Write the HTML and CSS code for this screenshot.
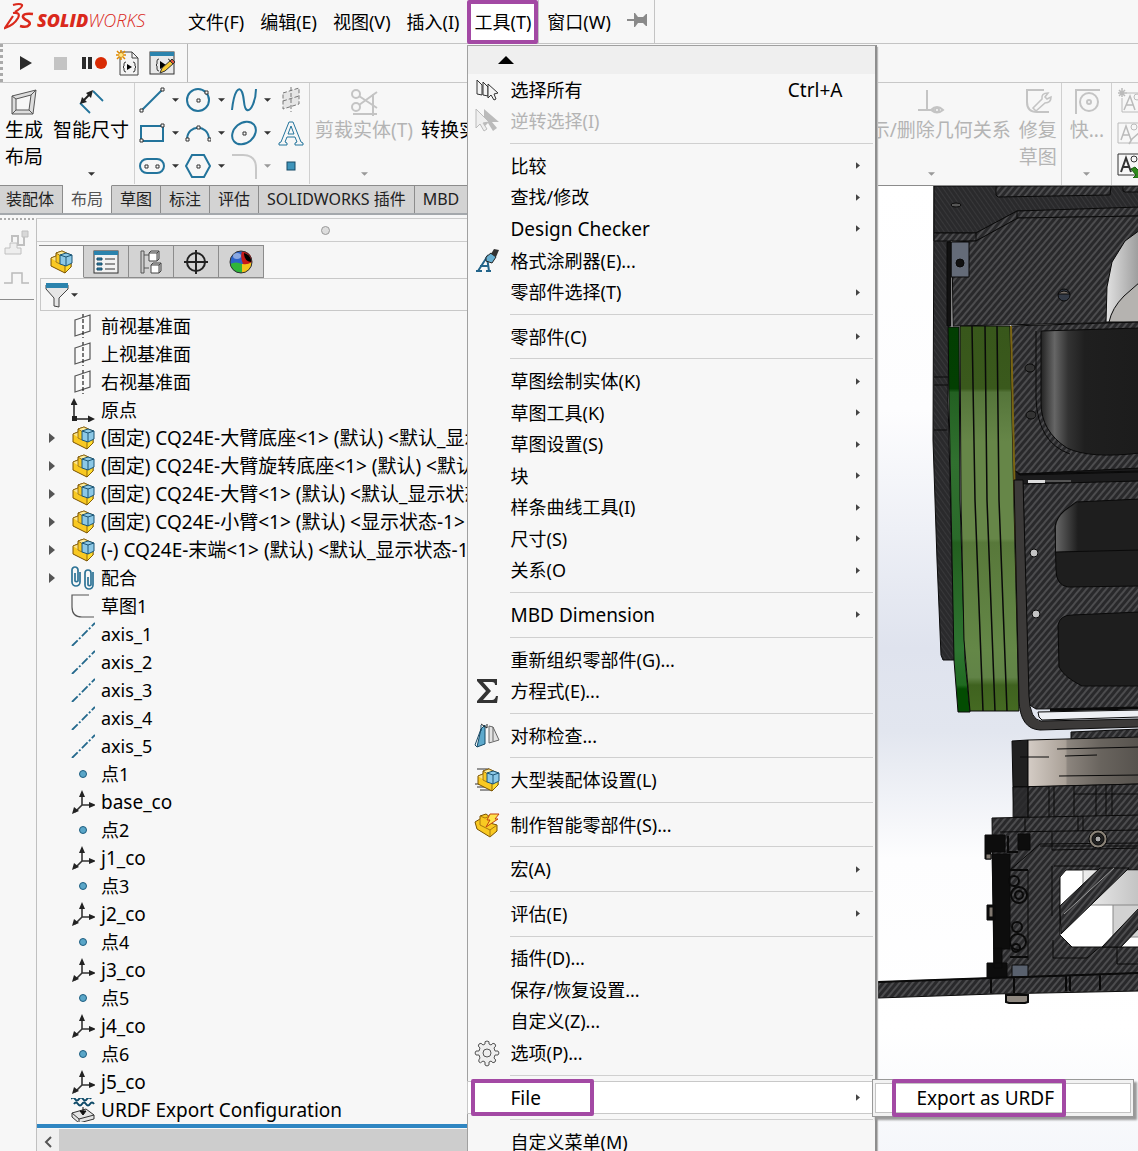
FILE: index.html
```html
<!DOCTYPE html>
<html lang="zh-CN">
<head>
<meta charset="utf-8">
<meta name="viewport" content="width=device-width, initial-scale=1">
<title>SOLIDWORKS</title>
<link rel="stylesheet" href="styles.css">
</head>
<body>
<svg class="defs" aria-hidden="true">
  <defs>
    <symbol id="part" viewBox="0 0 24 24">
      <path d="M2 8l5-2V3l6-2 9 4v12l-6 6L2 16z" fill="#f9c922" stroke="#7a5200"/>
      <path d="M2 8l5-2v6l4 2" fill="#fde58a" stroke="#7a5200" stroke-width=".7"/>
      <path d="M7 3l6-2 4 2-5 3z" fill="#fdeb9a" stroke="#7a5200" stroke-width=".7"/>
      <path d="M16 15l6-3v5l-6 6z" fill="#ffdc2e" stroke="#7a5200" stroke-width=".8"/>
      <path d="M11 5l6-2 6 2v8l-6 3-6-2z" fill="#8cc8e6" stroke="#1d5676"/>
      <path d="M11 5l6 2 6-2M17 7v9" fill="none" stroke="#1d5676"/>
    </symbol>
    <symbol id="plane" viewBox="0 0 24 24">
      <path d="M4 6l15-5v16L4 22z" fill="#fafafa" stroke="#555" stroke-width="1.2"/>
      <path d="M12 -1v26" stroke="#222" stroke-width="1.2" stroke-dasharray="4 2"/>
    </symbol>
    <symbol id="origin" viewBox="0 0 24 24">
      <path d="M3 21V5M3 21h15" stroke="#222" stroke-width="1.5"/>
      <path d="M3 0l3.500 7h-7zM24 21l-7 3.500v-7z" fill="#222"/><rect x="1" y="18" width="5" height="5" fill="#222"/>
    </symbol>
    <symbol id="mates" viewBox="0 0 24 24">
      <g fill="none" stroke="#2d7396" stroke-width="1.700"><path d="M4 7v8a2 2 0 0 0 3 0V4a3 3 0 0 0-6 0v12a4 4 0 0 0 8 0V6"/><path d="M17 11v8a2 2 0 0 0 3 0V7a3 3 0 0 0-6 0v12a4 4 0 0 0 8 0V6"/></g>
    </symbol>
    <symbol id="sketch" viewBox="0 0 24 24"><path d="M18 1H1v12q0 10 10 10h12" fill="none" stroke="#555" stroke-width="1.200"/></symbol>
    <symbol id="axis" viewBox="0 0 24 24"><path d="M1 24L24 1" stroke="#23688c" stroke-width="1.800" stroke-dasharray="8 2 2 2"/></symbol>
    <symbol id="point" viewBox="0 0 24 24"><circle cx="12" cy="12" r="3.500" fill="#5aa6c8" stroke="#1d5d80"/></symbol>
    <symbol id="coord" viewBox="0 0 24 24">
      <path d="M11 15V5M11 15h9M11 15l-7 7" stroke="#333" stroke-width="1.600"/>
      <path d="M11 0l3 7H8zM25 15l-7 3v-6zM1 24l2-7 5 4z" fill="#222"/>
    </symbol>
    <symbol id="urdf" viewBox="0 0 24 24">
      <path d="M0 1q2-3 4 0t4 0 4 0 4 0 4 0M3 6q2-3 4 0t4 0 4 0 4 0 4 0" fill="none" stroke="#0e4a68" stroke-width="2"/>
      <path d="M1 15l14-4 8 6v4L8 25l-7-6z" fill="#e4e4e4" stroke="#333"/><path d="M1 15l7 6 15-4M8 21v4" fill="none" stroke="#333"/>
      <path d="M12 9v4M9 13h6l-3 4z" stroke="#111" fill="#111"/>
    </symbol>
    <symbol id="tri-d" viewBox="0 0 8 4"><path d="M0 0h8L4 4z" fill="currentColor"/></symbol>
    <symbol id="tri-r" viewBox="0 0 6 10"><path d="M0 0l6 5-6 5z" fill="currentColor"/></symbol>
    <symbol id="cursors" viewBox="0 0 24 24">
      <g fill="#f4f4f4" stroke="#333"><path d="M2 2v14l5 1V7z"/><path d="M8 4v13l5 1V9z"/><path d="M13 6v14l3-3 3 5 2-1-2-5 4-1z"/></g>
    </symbol>
    <symbol id="invert" viewBox="0 0 24 24">
      <path d="M9 0v18l4-4 5 8 4-3-5-6h7z" fill="#bbb"/><path d="M1 0v19l4-4 4 7 3-2-4-6 6-1z" fill="#efefef" stroke="#bbb"/>
    </symbol>
  </defs>
</svg>

<div class="app">
  <header class="menubar">
    <div class="logo">
      <svg width="30" height="30" viewBox="0 0 30 30" fill="none" stroke="#da291c" stroke-width="2.600" aria-hidden="true">
        <path d="M9 3q7-2 9 0 1 2-7 7" stroke-width="2.200"/><path d="M9 11q8-1 5 5-4 7-13 10l8-12" stroke-width="2.200"/>
        <path d="M29 12q-9-1-10 2-1 2 5 5 3 2 1 4-2 3-9 1"/>
      </svg>
      <span class="wordmark"><b>SOLID</b><span>WORKS</span></span>
    </div>
    <nav class="menus" aria-label="主菜单">
      <button class="menu-title">文件(F)</button>
      <button class="menu-title">编辑(E)</button>
      <button class="menu-title">视图(V)</button>
      <button class="menu-title">插入(I)</button>
      <div class="menu-host">
        <button class="menu-title open" aria-expanded="true">工具(T)</button>
        <span class="mark mark-title"></span>
        <div class="dropdown" role="menu" aria-label="工具">
          <button class="scroll-up" aria-label="向上滚动"><svg width="16" height="8" viewBox="0 0 16 8"><path d="M0 8l8-8 8 8z"/></svg></button>
          <button class="item" role="menuitem"><svg class="ic"><use href="#cursors"/></svg><span>选择所有</span><kbd class="latin">Ctrl+A</kbd></button>
          <button class="item" role="menuitem" disabled><svg class="ic"><use href="#invert"/></svg><span>逆转选择(I)</span></button>
          <hr>
          <button class="item sub" role="menuitem"><span>比较</span><svg class="more"><use href="#tri-r"/></svg></button>
          <button class="item sub" role="menuitem"><span>查找/修改</span><svg class="more"><use href="#tri-r"/></svg></button>
          <button class="item sub" role="menuitem"><span class="latin">Design Checker</span><svg class="more"><use href="#tri-r"/></svg></button>
          <button class="item" role="menuitem"><svg class="ic" viewBox="0 0 24 24"><path d="M1 22h6M3 22L12 8l2 14M5 17h8M11 22h5" fill="none" stroke="#23648a" stroke-width="2"/><path d="M11 8l5-4 5 4-4 6-6-2z" fill="#67aed0" stroke="#222"/><path d="M16 5l3-5 5 1-3 7z" fill="#333"/></svg><span>格式涂刷器(E)...</span></button>
          <button class="item sub" role="menuitem"><span>零部件选择(T)</span><svg class="more"><use href="#tri-r"/></svg></button>
          <hr>
          <button class="item sub" role="menuitem"><span>零部件(C)</span><svg class="more"><use href="#tri-r"/></svg></button>
          <hr>
          <button class="item sub" role="menuitem"><span>草图绘制实体(K)</span><svg class="more"><use href="#tri-r"/></svg></button>
          <button class="item sub" role="menuitem"><span>草图工具(K)</span><svg class="more"><use href="#tri-r"/></svg></button>
          <button class="item sub" role="menuitem"><span>草图设置(S)</span><svg class="more"><use href="#tri-r"/></svg></button>
          <button class="item sub" role="menuitem"><span>块</span><svg class="more"><use href="#tri-r"/></svg></button>
          <button class="item sub" role="menuitem"><span>样条曲线工具(I)</span><svg class="more"><use href="#tri-r"/></svg></button>
          <button class="item sub" role="menuitem"><span>尺寸(S)</span><svg class="more"><use href="#tri-r"/></svg></button>
          <button class="item sub" role="menuitem"><span>关系(O</span><svg class="more"><use href="#tri-r"/></svg></button>
          <hr>
          <button class="item sub" role="menuitem"><span class="latin">MBD Dimension</span><svg class="more"><use href="#tri-r"/></svg></button>
          <hr>
          <button class="item" role="menuitem"><span>重新组织零部件(G)...</span></button>
          <button class="item" role="menuitem"><svg class="ic" viewBox="0 0 24 24"><path d="M2 0h20v6h-2q0-3-3-3H8l8 9-8 9h9q3 0 4-4h2l-1 7H2v-2l9-10L2 2z" fill="#333"/></svg><span>方程式(E)...</span></button>
          <hr>
          <button class="item" role="menuitem"><svg class="ic" viewBox="0 0 24 24"><path d="M6 5l4-4v19l-8 3z" fill="#5da9cc" stroke="#174a66"/><path d="M6 5L0 21l2 2M6 1v6" fill="none" stroke="#174a66"/><path d="M14 2v17l10-3L18 3zM18 3v14" fill="#e2e2e2" stroke="#666"/><path d="M6 0l6 4v-4" fill="none" stroke="#222"/></svg><span>对称检查...</span></button>
          <hr>
          <button class="item" role="menuitem"><svg class="ic" viewBox="0 0 24 24"><path d="M2 1h12M0 16h12M2 19h13M5 22h12" stroke="#333"/><use href="#part" x="1"/></svg><span>大型装配体设置(L)</span></button>
          <hr>
          <button class="item" role="menuitem"><svg class="ic" viewBox="0 0 24 24"><path d="M0 9l5-3V3l6-2 4 3v6l7 2v6l-7 6L2 16z" fill="#f9c922" stroke="#7a5200"/><path d="M5 6v6l10 5 7-5M15 17v7M5 3l5 2 5-2" fill="none" stroke="#a87810"/><path d="M15 1h9l-4 5h3L11 14l4-7h-3z" fill="#ffe34d" stroke="#c2410c"/></svg><span>制作智能零部件(S)...</span></button>
          <hr>
          <button class="item sub" role="menuitem"><span>宏(A)</span><svg class="more"><use href="#tri-r"/></svg></button>
          <hr>
          <button class="item sub" role="menuitem"><span>评估(E)</span><svg class="more"><use href="#tri-r"/></svg></button>
          <hr>
          <button class="item" role="menuitem"><span>插件(D)...</span></button>
          <button class="item" role="menuitem"><span>保存/恢复设置...</span></button>
          <button class="item" role="menuitem"><span>自定义(Z)...</span></button>
          <button class="item" role="menuitem"><svg class="ic" viewBox="0 0 24 24" fill="#eee" stroke="#555"><path d="M10 3q-1-3 2-3t2 3l2 1q2-3 4-1t-1 4l1 3q4-1 4 2t-4 2l-1 3q3 2 1 4t-4-1l-2 1q1 4-2 4t-2-4l-2-1q-3 3-4 1t1-4l-1-3q-4 1-4-2t4-2l1-3q-3-2-1-4t4 1z"/><circle cx="12" cy="12" r="4"/></svg><span>选项(P)...</span></button>
          <hr>
          <div class="item-host">
            <button class="item sub active" role="menuitem" aria-expanded="true"><span class="latin">File</span><svg class="more"><use href="#tri-r"/></svg></button>
            <span class="mark mark-file"></span>
            <div class="flyout" role="menu" aria-label="File">
              <button class="latin" role="menuitem">Export as URDF</button>
              <span class="mark mark-export"></span>
            </div>
          </div>
          <hr>
          <button class="item" role="menuitem"><span>自定义菜单(M)</span></button>
        </div>
      </div>
      <button class="menu-title">窗口(W)</button>
      <button class="pin" aria-label="固定菜单"><svg width="20" height="14" viewBox="0 0 20 14"><path d="M0 6h7V0h1l3 4h5l3-3h1v12h-1l-3-3h-5l-3 4H7V8H0z" fill="#8a8a8a"/></svg></button>
    </nav>
  </header>

  <div class="macrobar">
    <div class="macros">
      <button aria-label="运行宏"><svg width="14" height="14" viewBox="0 0 14 14"><path d="M1 0l12 7-12 7z" fill="#2b2b2b"/></svg></button>
      <button aria-label="停止宏"><svg width="13" height="13"><rect width="13" height="13" fill="#c4c4c4"/></svg></button>
      <button aria-label="录制宏"><svg width="26" height="14" viewBox="0 0 26 14"><path d="M1 1h4v12H1zM7 1h4v12H7z" fill="#2b2b2b"/><circle cx="20" cy="7" r="6" fill="#d92b04"/></svg></button>
      <button aria-label="新建宏"><svg width="24" height="26" viewBox="0 0 24 26"><path d="M4 2h12l6 6v17H4z" fill="#f4f4f4" stroke="#444"/><path d="M16 2v6h6" fill="none" stroke="#444"/><path d="M10 12q-2 0-2 2v2l-1 1 1 1v2q0 2 2 2M17 12q2 0 2 2v2l1 1-1 1v2q0 2-2 2" fill="none" stroke="#333"/><path d="M11 14l5 3-5 3z"/><path d="M5 0v10M0 5h10M1 1l8 8M9 1L1 9" stroke="#e08a00" stroke-width="1.500"/><circle cx="5" cy="5" r="2" fill="#ffe680"/></svg></button>
      <button aria-label="编辑宏"><svg width="26" height="26" viewBox="0 0 26 26"><rect x="1" y="2" width="24" height="22" fill="#e9e9e9" stroke="#333"/><rect x="1" y="2" width="24" height="4" fill="#2b83ad"/><path d="M10 9q-2 0-2 2v3l-1 1 1 1v3q0 2 2 2M19 9q2 0 2 3" fill="none" stroke="#333"/><path d="M11 11l6 4-6 4z"/><path d="M11 23l2-5 9-8 3 3-9 8z" fill="#f7ca34" stroke="#333"/><path d="M21 11l2-2 3 3-2 2z" fill="#d8543c" stroke="#333"/></svg></button>
    </div>
  </div>

  <div class="ribbon">
    <button class="tool two"><svg width="28" height="28" viewBox="0 0 28 28" fill="#ddd" stroke="#555"><path fill-rule="evenodd" d="M2 8l24-6-3 24H2zm4 3v11h13l2-15z"/><path d="M2 8l4 3M26 2l-5 5M2 26l4-4M23 26l-4-4"/></svg><span>生成<br>布局</span></button>
    <button class="tool"><svg width="28" height="28" viewBox="0 0 28 28" fill="none"><path d="M16 3l10 10M3 15l10 10" stroke="#23749c" stroke-width="1.800"/><path d="M6 13l8-8" stroke="#222" stroke-width="2"/><path d="M3 16l2-7 5 5zM16 2l-7 3 5 5z" fill="#222"/></svg><span>智能尺寸</span><svg class="dd"><use href="#tri-d"/></svg></button>
    <div class="sketch-grid">
      <button aria-label="直线"><svg class="sk" viewBox="0 0 26 26"><path d="M2 24L24 2"/><path class="node" d="M1 22h3v3H1zM22 1h3v3h-3z"/></svg></button><svg class="dd"><use href="#tri-d"/></svg>
      <button aria-label="圆"><svg class="sk" viewBox="0 0 26 26"><circle cx="13" cy="13" r="11"/><path class="node" d="M12 12h3v3h-3zM20 4h3v3h-3z"/></svg></button><svg class="dd"><use href="#tri-d"/></svg>
      <button aria-label="样条曲线"><svg class="sk" viewBox="0 0 26 26"><path d="M1 23C3 4 8-2 11 5s1 16 5 18 9-10 9-21"/></svg></button><svg class="dd"><use href="#tri-d"/></svg>
      <button aria-label="基准面"><svg class="sk off" viewBox="0 0 26 26"><path d="M5 6l16-5v16L5 22z" fill="#e6e6e6" stroke-dasharray="4 2"/><path d="M13 0v25M5 14l16-5" stroke-dasharray="4 2"/></svg></button>
      <button aria-label="矩形"><svg class="sk" viewBox="0 0 26 26"><path d="M2 6h22v15H2z"/><path class="node" d="M1 19h3v3H1zM22 4h3v3h-3z"/></svg></button><svg class="dd"><use href="#tri-d"/></svg>
      <button aria-label="圆弧"><svg class="sk" viewBox="0 0 26 26"><path d="M2 19C3 4 23 4 24 19"/><path class="node" d="M1 18h3v3H1zM23 18h3v3h-3zM12 6h3v3h-3z"/></svg></button><svg class="dd"><use href="#tri-d"/></svg>
      <button aria-label="椭圆"><svg class="sk" viewBox="0 0 26 26"><ellipse cx="13" cy="13" rx="13" ry="10" transform="rotate(-40 13 13)"/><path class="node" d="M12 12h3v3h-3z"/></svg></button><svg class="dd"><use href="#tri-d"/></svg>
      <button aria-label="文字"><svg class="sk thin" viewBox="0 0 26 26"><path d="M1 25v-2l2-1L11 2h4l8 20 2 1v2h-8v-2l2-1-2-5H9l-2 5 2 1v2zM10 14h6l-3-8z"/></svg></button>
      <button aria-label="直槽口"><svg class="sk" viewBox="0 0 26 26"><rect x="1" y="6" width="24" height="14" rx="7"/><path class="node" d="M6 12h3v3H6zM17 12h3v3h-3z"/></svg></button><svg class="dd"><use href="#tri-d"/></svg>
      <button aria-label="多边形"><svg class="sk" viewBox="0 0 26 26"><path d="M1 13L7 2h12l6 11-6 11H7z"/><path class="node" d="M12 12h3v3h-3z"/></svg></button><svg class="dd"><use href="#tri-d"/></svg>
      <button aria-label="圆角" disabled><svg class="sk pale" viewBox="0 0 26 26"><path d="M1 2h11q13 0 13 13v11"/></svg></button><svg class="dd dim"><use href="#tri-d"/></svg>
      <button aria-label="点"><svg class="sk" viewBox="0 0 26 26"><rect x="9" y="9" width="8" height="8" fill="#3f94ba" stroke="#174a66" stroke-width="1"/></svg></button>
    </div>
    <button class="tool" disabled><svg width="28" height="28" viewBox="0 0 28 28" fill="none" stroke="#c4c4c4" stroke-width="2"><circle cx="6" cy="6" r="4"/><circle cx="6" cy="19" r="4"/><path d="M9 8l18 12M9 17L27 4M3 26h24M23 6v22"/></svg><span>剪裁实体(T)</span><svg class="dd dim"><use href="#tri-d"/></svg></button>
    <button class="tool convert"><span>转换实体引用</span></button>
    <div class="ribbon-end">
      <button class="tool" disabled><svg width="28" height="28" viewBox="0 0 28 28" fill="none" stroke="#c4c4c4" stroke-width="2"><path d="M10 2v20M1 22h16"/><path d="M14 22q6-6 12 0-6 5-12 0z"/><circle cx="20" cy="22" r="2"/></svg><span>显示/删除几何关系</span><svg class="dd dim"><use href="#tri-d"/></svg></button>
      <button class="tool two" disabled><svg width="28" height="28" viewBox="0 0 28 28" fill="none" stroke="#c4c4c4" stroke-width="2"><path d="M20 2H3v12q0 10 10 10h12"/><path d="M9 20l9-9q-1-6 6-6l-3 4 2 2 4-2q0 6-6 6l-9 8z" stroke-width="1.600"/></svg><span>修复<br>草图</span></button>
      <button class="tool snap" disabled><svg width="28" height="28" viewBox="0 0 28 28" fill="none" stroke="#c4c4c4" stroke-width="2"><path d="M3 26V2h24"/><circle cx="16" cy="14" r="9"/><circle cx="16" cy="14" r="2"/></svg><span>快...</span><svg class="dd dim"><use href="#tri-d"/></svg></button>
      <div class="blocks">
        <svg width="28" height="26" viewBox="0 0 28 26" fill="none" stroke="#bbb"><path d="M10 5h18M5 10v14h23" /><path d="M7 22L13 8l5 14M9 17h7M5 0v9M1 5h9M2 2l6 6M8 2L2 8" stroke-width="1.500"/><circle cx="20" cy="9" r="3"/></svg>
        <svg width="28" height="26" viewBox="0 0 28 26" fill="none" stroke="#bbb"><path d="M1 3h27M1 3v20h27"/><path d="M4 20L9 6l5 14M6 15h7M12 24l3-5 9-8" stroke-width="1.500"/><circle cx="17" cy="7" r="3"/></svg>
        <svg width="28" height="26" viewBox="0 0 28 26" fill="none" stroke="#333"><path d="M1 2h27M1 2v21h27"/><path d="M4 20L9 6l5 14M6 15h7" stroke-width="2"/><circle cx="17" cy="7" r="3"/><path d="M14 17l4-2 4 4 2-2v9h-8l3-3z" fill="#2f8a1c" stroke="#1c5c10"/></svg>
      </div>
    </div>
  </div>

  <div class="workspace">
    <div class="left">
      <nav class="tabs" aria-label="命令管理器">
        <button>装配体</button><button class="on">布局</button><button>草图</button><button>标注</button><button>评估</button><button>SOLIDWORKS 插件</button><button>MBD</button>
      </nav>
      <div class="dock">
        <div class="rail">
          <svg width="26" height="26" viewBox="0 0 26 26" fill="#eee" stroke="#c0c0c0"><path d="M1 24h16v-6h-4v-5H6v5H1z"/><path d="M8 12V6h6v9h6V6" fill="none" stroke-width="2"/><path d="M18 1h6v6h-6z" fill="#d8d8d8"/></svg>
          <svg width="26" height="14" viewBox="0 0 26 14" fill="none" stroke="#bbb" stroke-width="1.500"><path d="M0 12h8V2h10v10h7"/></svg>
        </div>
        <section class="panel">
          <div class="splitter"><i></i></div>
          <div class="ptabs">
            <button class="on" aria-label="设计树"><svg class="ic"><use href="#part"/></svg></button>
            <button aria-label="属性"><svg class="ic wide" viewBox="0 0 26 24"><rect x="1" y="1" width="24" height="22" fill="#f2f2f2" stroke="#333"/><path d="M1 1h24v4H1z" fill="#2b83ad"/><path d="M4 8h5v2H4zM4 13h5v2H4zM4 18h5v2H4z" fill="#2b83ad" stroke="#174a66"/><path d="M12 9h10M12 14h10M12 19h10" stroke="#333"/></svg></button>
            <button aria-label="配置"><svg class="ic" viewBox="0 0 24 24"><path d="M2 1h3v22H2zM5 5h5M5 18h5" fill="#ccc" stroke="#555"/><path d="M10 3h8v8h-8zM12 15h8v8h-8z" fill="#fff" stroke="#444"/><path d="M10 3l2-2h8v8l-2 2M18 3l2-2M12 15l2-2h8v8l-2 2M20 15l2-2" fill="none" stroke="#444"/></svg></button>
            <button aria-label="尺寸专家"><svg class="ic" viewBox="0 0 24 24" fill="none" stroke="#222" stroke-width="2"><circle cx="12" cy="12" r="9"/><path d="M12 0v24M0 12h24"/></svg></button>
            <button aria-label="外观"><svg class="ic" viewBox="0 0 24 24"><circle cx="12" cy="12" r="11" fill="#2b62c8"/><path d="M1 14q6-3 12 0v9Q3 23 1 14z" fill="#2fb53a"/><path d="M13 14q5 0 10-2-1 10-10 11z" fill="#f2c21a"/><path d="M13 1q10 1 10 11-5 3-9 2-3-7-1-13z" fill="#c81818"/><path d="M15 3q8 3 7 9-7-1-7-9z" fill="#000"/><circle cx="12" cy="12" r="11" fill="none" stroke="#333"/><ellipse cx="8" cy="6" rx="4" ry="3" fill="#fff" opacity=".45"/></svg></button>
          </div>
          <button class="filter" aria-label="过滤"><svg width="24" height="26" viewBox="0 0 24 26"><path d="M1 3v4l8 9v8l5 1v-9l9-9V3z" fill="#e6e6e6" stroke="#444"/><path d="M1 1h22v5H1z" fill="#2b83ad"/></svg><svg class="dd"><use href="#tri-d"/></svg></button>
          <ul class="tree">
            <li><i></i><svg class="ic"><use href="#plane"/></svg><span>前视基准面</span></li>
            <li><i></i><svg class="ic"><use href="#plane"/></svg><span>上视基准面</span></li>
            <li><i></i><svg class="ic"><use href="#plane"/></svg><span>右视基准面</span></li>
            <li><i></i><svg class="ic"><use href="#origin"/></svg><span>原点</span></li>
            <li class="latin"><svg class="tw"><use href="#tri-r"/></svg><svg class="ic"><use href="#part"/></svg><span>(固定) CQ24E-大臂底座&lt;1&gt; (默认) &lt;默认_显示状态-1&gt;</span></li>
            <li class="latin"><svg class="tw"><use href="#tri-r"/></svg><svg class="ic"><use href="#part"/></svg><span>(固定) CQ24E-大臂旋转底座&lt;1&gt; (默认) &lt;默认_显示状态-1&gt;</span></li>
            <li class="latin"><svg class="tw"><use href="#tri-r"/></svg><svg class="ic"><use href="#part"/></svg><span>(固定) CQ24E-大臂&lt;1&gt; (默认) &lt;默认_显示状态-1&gt;</span></li>
            <li class="latin"><svg class="tw"><use href="#tri-r"/></svg><svg class="ic"><use href="#part"/></svg><span>(固定) CQ24E-小臂&lt;1&gt; (默认) &lt;显示状态-1&gt;</span></li>
            <li class="latin"><svg class="tw"><use href="#tri-r"/></svg><svg class="ic"><use href="#part"/></svg><span>(-) CQ24E-末端&lt;1&gt; (默认) &lt;默认_显示状态-1&gt;</span></li>
            <li><svg class="tw"><use href="#tri-r"/></svg><svg class="ic"><use href="#mates"/></svg><span>配合</span></li>
            <li><i></i><svg class="ic"><use href="#sketch"/></svg><span>草图1</span></li>
            <li><i></i><svg class="ic"><use href="#axis"/></svg><span>axis_1</span></li>
            <li><i></i><svg class="ic"><use href="#axis"/></svg><span>axis_2</span></li>
            <li><i></i><svg class="ic"><use href="#axis"/></svg><span>axis_3</span></li>
            <li><i></i><svg class="ic"><use href="#axis"/></svg><span>axis_4</span></li>
            <li><i></i><svg class="ic"><use href="#axis"/></svg><span>axis_5</span></li>
            <li><i></i><svg class="ic"><use href="#point"/></svg><span>点1</span></li>
            <li class="latin"><i></i><svg class="ic"><use href="#coord"/></svg><span>base_co</span></li>
            <li><i></i><svg class="ic"><use href="#point"/></svg><span>点2</span></li>
            <li class="latin"><i></i><svg class="ic"><use href="#coord"/></svg><span>j1_co</span></li>
            <li><i></i><svg class="ic"><use href="#point"/></svg><span>点3</span></li>
            <li class="latin"><i></i><svg class="ic"><use href="#coord"/></svg><span>j2_co</span></li>
            <li><i></i><svg class="ic"><use href="#point"/></svg><span>点4</span></li>
            <li class="latin"><i></i><svg class="ic"><use href="#coord"/></svg><span>j3_co</span></li>
            <li><i></i><svg class="ic"><use href="#point"/></svg><span>点5</span></li>
            <li class="latin"><i></i><svg class="ic"><use href="#coord"/></svg><span>j4_co</span></li>
            <li><i></i><svg class="ic"><use href="#point"/></svg><span>点6</span></li>
            <li class="latin"><i></i><svg class="ic"><use href="#coord"/></svg><span>j5_co</span></li>
            <li class="latin"><i></i><svg class="ic"><use href="#urdf"/></svg><span>URDF Export Configuration</span></li>
          </ul>
          <div class="hscroll"><button aria-label="向左滚动"><svg width="8" height="12" viewBox="0 0 8 12"><path d="M7 1L2 6l5 5" fill="none" stroke="#555" stroke-width="2"/></svg></button><span></span></div>
        </section>
      </div>
    </div>

    <main class="viewport">
      <svg viewBox="469 186 669 965" preserveAspectRatio="xMinYMin slice" role="img" aria-label="机械臂装配体模型">
        <defs>
          <pattern id="cf" width="5" height="5" patternUnits="userSpaceOnUse" patternTransform="rotate(40)"><rect width="5" height="5" fill="#29292b"/><rect width="2" height="5" fill="#4c4c4e"/></pattern>
          <pattern id="cf2" width="4" height="4" patternUnits="userSpaceOnUse" patternTransform="rotate(-35)"><rect width="4" height="4" fill="#2a2a2c"/><rect width="1" height="4" fill="#38383a"/></pattern>
          <linearGradient id="sky" x1="0" y1="0" x2="0" y2="1"><stop offset="0" stop-color="#fff"/><stop offset=".16" stop-color="#fdfdfe"/><stop offset=".33" stop-color="#dfe3ee"/><stop offset=".39" stop-color="#e2e6ef"/><stop offset=".48" stop-color="#fdfdfe"/><stop offset=".6" stop-color="#fff"/><stop offset=".7" stop-color="#f4f6fa"/></linearGradient>
          <linearGradient id="gd" gradientUnits="userSpaceOnUse" x1="0" y1="327" x2="0" y2="712"><stop offset="0" stop-color="#023e02"/><stop offset=".16" stop-color="#033f02"/><stop offset=".17" stop-color="#236022"/><stop offset=".35" stop-color="#30702f"/><stop offset=".55" stop-color="#2a6a2a"/><stop offset=".56" stop-color="#235f1f"/><stop offset=".84" stop-color="#2e7531"/><stop offset=".93" stop-color="#1f6a20"/><stop offset=".94" stop-color="#034c02"/></linearGradient>
          <linearGradient id="gl" gradientUnits="userSpaceOnUse" x1="0" y1="327" x2="0" y2="712"><stop offset="0" stop-color="#38571b"/><stop offset=".16" stop-color="#3a591c"/><stop offset=".17" stop-color="#55753a"/><stop offset=".3" stop-color="#668648"/><stop offset=".55" stop-color="#668648"/><stop offset=".56" stop-color="#58783a"/><stop offset=".84" stop-color="#648747"/><stop offset=".91" stop-color="#618347"/><stop offset=".93" stop-color="#3f621f"/><stop offset="1" stop-color="#456a22"/></linearGradient>
          <linearGradient id="bore" gradientUnits="userSpaceOnUse" x1="1041" y1="0" x2="1138" y2="0"><stop offset="0" stop-color="#222"/><stop offset=".14" stop-color="#666"/><stop offset=".28" stop-color="#333"/><stop offset=".45" stop-color="#1f1f1f"/><stop offset="1" stop-color="#1c1c1c"/></linearGradient>
          <linearGradient id="ring" gradientUnits="userSpaceOnUse" x1="1028" y1="0" x2="1138" y2="0"><stop offset="0" stop-color="#d4ccc5"/><stop offset=".34" stop-color="#aaa198"/><stop offset=".36" stop-color="#8c857e"/><stop offset=".66" stop-color="#69645e"/><stop offset="1" stop-color="#57534e"/></linearGradient>
          <linearGradient id="metal" x1="0" x2="1"><stop offset="0" stop-color="#e2e2e2"/><stop offset="1" stop-color="#9a9a9a"/></linearGradient>
          <linearGradient id="glow" gradientUnits="userSpaceOnUse" x1="1056" y1="0" x2="1078" y2="0"><stop offset="0" stop-color="#666"/><stop offset="1" stop-color="#1e1e1e"/></linearGradient>
        </defs>
        <rect x="469" y="186" width="1400" height="1400" fill="url(#sky)"/>
        <g stroke="#0a0a0a">
          <path d="M934 186h17l-3 214 4 160 3 100-12 0-2-5-4-95-4-120z" fill="url(#cf2)"/>
          <path d="M934 377h14M934 385h14M934 430h13" fill="none"/>
          <path d="M934 186h206v24l-123 1-41 22h-42z" fill="url(#cf2)"/>
          <path d="M996 186v9l2 2 112-2 1-9zM1123 186v5l2 1h15v-6z" fill="url(#cf)"/>
          <path d="M934 233h42l41-22 123-4v9l-122 2-42 23h-42z" fill="url(#cf)"/>
          <path d="M976 233v8M1017 211v7" fill="none"/>
          <path d="M952 242l24-1 42-23 122-2v106l-187 4z" fill="url(#cf)"/>
          <path d="M951 242h18v35h-18z" fill="#646b78"/><circle cx="960" cy="263" r="4" fill="#111"/>
          <path d="M947 242h4v84h-4z" fill="#111"/>
          <ellipse cx="956" cy="205" rx="5" ry="2" fill="#555"/><circle cx="1064" cy="295" r="6" fill="#333a46"/><path d="M1058 294q6-6 12 0z" fill="#776f68"/>
          <path d="M1140 230l-15 11-13 21-5 25-1 35h34z" fill="url(#metal)"/><path d="M1109 322q3-14 15-26l16-14v40z" fill="#b5b3b0"/>
          <path d="M1011 466h129v20h-126z" fill="#1c1c1d"/>
          <path d="M1011 326l129-4v146l-120 6-6-4z" fill="url(#cf)"/>
          <path d="M1041 331l99-3v125q-50 6-73-5-26-17-26-45z" fill="url(#bore)"/>
          <path d="M1036 331v68q2 44 34 55M1014 470l6 5 120-3M1018 474l122-3" fill="none"/>
          <path d="M948 327h11l1 173 5 160 5 52h-12l-4-52-5-260z" fill="url(#gd)"/>
          <path d="M960 326h50l4 180 5 205h-49l-6-71-3-140z" fill="url(#gl)"/>
          <path d="M972 326l3 174 8 211M985 326l2 174 8 211M997 326l2 174 8 211" fill="none" stroke-width="1.500"/>
          <path d="M1011 326l4 180 5 190" fill="none" stroke="#7a6512" stroke-width="2"/>
          <path d="M1028 480h17v3h-17z" fill="#ddd" stroke="none"/><path d="M1045 480h26v2h-26z" fill="#555" stroke="none"/>
          <path d="M1023 484l117-3v227l-104 1-8-5z" fill="url(#cf)"/>
          <path d="M1055 526q2-9 9-15l12-9 64-3v87l-72 1q-12-2-12-17z" fill="#1e1e1e"/>
          <path d="M1056 552v-26q1-8 9-15l13-9v49z" fill="url(#glow)" stroke="none"/><path d="M1056 552l84-2" fill="none"/>
          <path d="M1058 625q2-10 14-10l68-3v74h-58q-18-9-23-19z" fill="#1e1e1e"/>
          <path d="M1014 480h9l6 216q1 24 12 25l99-2v8l-100 3q-20-1-21-30z" fill="#3c3a39"/>
          <path d="M1038 712l102-2v7l-98 3q-4-2-4-8z" fill="#eef0f5"/><path d="M1050 710l90-2" stroke-width="3"/>
          <circle cx="1034" cy="553" r="4" fill="#c4c4c4"/><circle cx="1036" cy="614" r="4" fill="#c4c4c4"/><ellipse cx="1030" cy="368" rx="5" ry="4" fill="#333"/><ellipse cx="1031" cy="415" rx="5" ry="4" fill="#333"/>
          <path d="M1071 732l69-3v10h-69z" fill="url(#cf)"/>
          <path d="M1012 741l16-1v47h-15z" fill="#202020"/><path d="M1028 740l112-3v47l-112 3z" fill="url(#ring)"/>
          <path d="M1020 757h29M1057 749l83-2M1065 756l32-1M1059 776l81-1" fill="none"/>
          <path d="M1013 787l127-3v32l-126 2z" fill="url(#cf)"/><path d="M1013 787h15v30h-15z" fill="#29292b" opacity=".8"/>
          <path d="M1028 787v30M1049 787v29M1054 787v29M1074 786v30M1096 785v31M1106 785v31M1112 785v31M1074 794h66" fill="none"/>
          <path d="M992 818l148-3v162l-146 2z" fill="url(#cf)"/>
          <path d="M1000 832l140-2M1078 816v15M1083 816v15M1025 818v14M1010 870l30-26 100-1M1052 832v18l88-2M1040 846h100M1028 870v90M1052 866v50M1054 866h46M1053 940v18h34l30-26" fill="none"/>
          <path d="M1060 877l6-7h74v77h-68l-12-12z" fill="#fff"/>
          <path d="M1083 870h57v35h-57z" fill="url(#metal)" stroke="none" opacity=".6"/><path d="M1113 905h27v32h-27z" fill="#d2d2d2" stroke="none"/><path d="M1083 870v35h57M1113 905v32h27" fill="none" stroke="#888"/>
          <path d="M1060 906l40-38h29l-68 66z" fill="url(#cf)"/><path d="M1064 914l50-46" fill="none" stroke="#999"/>
          <path d="M1102 947l38-40v20l-19 20z" fill="url(#cf)"/><path d="M1117 947v17h23" fill="none"/>
          <circle cx="1098" cy="839" r="9" fill="#8a8378"/><circle cx="1098" cy="839" r="6" fill="#222"/><circle cx="1098" cy="839" r="3" fill="#aaa"/>
          <path d="M985 835h20v17h-14v7h-6zM992 854h18v95h-16zM987 905h8v15h-8zM987 963h20v15h-20zM994 948h8v20h-8zM1018 834h12v16h-12z" fill="#0d0d0d"/>
          <path d="M986 854h5v5h-5zM989 907h4v10h-4z" fill="#807870"/><path d="M1012 965h16v12h-16z" fill="#59616e"/>
          <g fill="none" stroke-width="2"><circle cx="1014" cy="881" r="5"/><circle cx="1019" cy="895" r="8"/><circle cx="1019" cy="895" r="4"/><circle cx="1017" cy="927" r="5"/><circle cx="1018" cy="942" r="8"/><circle cx="1016" cy="948" r="4"/><path d="M1010 870h18M1010 957h18M1008 836v16h10"/></g>
          <path d="M878 982l114-4 148-5v18l-146 3-116 4z" fill="url(#cf)"/><path d="M878 982l114-4 148-5M991 979v14M1014 978v15M1066 976v15M1070 976v15M1100 975v15" fill="none" stroke-width="2"/>
          <path d="M1006 995h22v7l-3 1h-16l-3-1z" fill="#8f8880" stroke-width="2"/>
        </g>
      </svg>
    </main>
  </div>
</div>
</body>
</html>
```

FILE: styles.css
```css
* { box-sizing: border-box; }

body {
  margin: 0;
  background: #f7f7f7;
  color: #000;
  font: 18px/28px "Noto Sans", "Noto Sans CJK SC", sans-serif;
}

button {
  margin: 0;
  padding: 0;
  border: 0;
  background: none;
  color: inherit;
  font: inherit;
  text-align: left;
  white-space: nowrap;
}

button:disabled { color: #b4b4b4; }
svg { display: block; flex: none; }

.defs { position: absolute; width: 0; height: 0; }
.ic { width: 24px; height: 24px; overflow: visible; }
.ic.wide { width: 26px; }
.dd { width: 7px; height: 4px; color: #333; }
.dd.dim { color: #999; }

.app {
  display: flex;
  flex-direction: column;
  height: 100vh;
  overflow: hidden;
}

/* Menu bar */
.menubar {
  display: flex;
  flex: none;
  height: 44px;
  border-bottom: 1px solid #c4c4c4;
}

.logo {
  display: flex;
  width: 180px;
  padding: 2px 0 0 4px;
  gap: 3px;
}

.wordmark {
  color: #da291c;
  font: italic 18px/36px "Open Sans", sans-serif;
  white-space: nowrap;
}

.wordmark b { font-weight: 800; }
.wordmark span { font-weight: 300; }

.menus {
  display: flex;
  padding-right: 7px;
  border-right: 1px solid #c4c4c4;
}

.menu-title { height: 43px; padding: 0 8px; }
.menu-title.open { padding: 0 7px; background: #fff; border-right: 1px solid #c4c4c4; }
.menu-host { position: relative; z-index: 5; }
.pin { padding: 0 0 4px 8px; }

.mark {
  position: absolute;
  border: 4px solid #a349a4;
  border-radius: 2px;
  pointer-events: none;
}

.mark-title { inset: 0 1px -1px 0; }

/* Tools menu */
.dropdown {
  position: absolute;
  top: 45px;
  left: 0;
  display: flex;
  flex-direction: column;
  width: 410px;
  height: calc(100vh - 37px);
  border: 1px solid #a0a0a0;
  border-right: 2px solid #8e8e8e;
  background: #f7f7f7;
  box-shadow: 1px 2px 1px #bbb;
}

.scroll-up {
  flex: none;
  height: 28px;
  padding-left: 30px;
  background: #efefef;
}

.item, .item-host { flex: 1 0 31px; max-height: 32px; }

.item {
  display: grid;
  grid-template-columns: 35px 1fr auto;
  align-items: center;
  padding: 0 15px 0 7px;
}

.item > span { grid-column: 2; line-height: 28px; }
.item kbd { padding-right: 18px; font-family: inherit; }
.menus .latin, .tree .latin { font-size: 19px; }
.more { width: 4px; height: 7px; color: #444; }
.dropdown hr {
  flex: none;
  height: 1px;
  margin: 6px 2px 6px 42px;
  border: 0;
  background: #d0d0d0;
}

.item-host { position: relative; display: flex; }
.item.active {
  flex: 1;
  background: #fff;
  box-shadow: 0 0 0 1px #c8c8c8;
}
.mark-file { inset: -3px auto -3px 3px; width: 123px; }

.flyout {
  position: absolute;
  top: -3px;
  left: 404px;
  display: flex;
  width: 262px;
  height: 38px;
  padding: 3px 2px;
  border: 1px solid #999;
  background: #f2f2f2;
  box-shadow: 3px 3px 2px #999;
}
.flyout button {
  flex: 1;
  padding-left: 40px;
  border: 1px solid #c4c4c4;
  background: #fff;
}
.mark-export { inset: -1px 67px -1px 19px; }

/* Macro toolbar */
.macrobar {
  display: flex;
  flex: none;
  height: 39px;
  border-bottom: 1px solid #c8c8c8;
}
.macros {
  display: flex;
  align-items: center;
  width: 188px;
  padding-left: 16px;
  border-left: 3px dotted #aaa;
  border-right: 1px solid #b4b4b4;
}
.macros button + button { margin-left: 9px; }
.macros button:nth-child(2) { margin-left: 21px; }
.macros button:nth-child(3) { margin-left: 14px; }

/* Ribbon */
.ribbon {
  display: flex;
  flex: none;
  height: 102px;
  font-size: 19px;
  line-height: 27px;
}
.tool {
  display: flex;
  flex-direction: column;
  flex: none;
  align-items: center;
  height: 100%;
  padding: 5px 5px 9px;
}
.tool > span { margin-top: 1px; }
.tool .dd { margin-top: auto; }
.tool.convert { padding: 33px 3px 0; }

.sketch-grid {
  display: grid;
  grid-template-columns: 34px 12px 34px 12px 34px 12px 36px;
  grid-template-rows: repeat(3, 33px);
  place-items: center;
  height: 101px;
  border: solid #d0d0d0;
  border-width: 0 1px;
}
.sk { width: 26px; height: 26px; fill: none; stroke: #23749c; stroke-width: 2; }
.sk.thin { stroke-width: 1; }
.sk.off { stroke: #777; stroke-width: 1; }
.sk.pale { stroke: #c8c8c8; }
.sk .node { fill: #fff; stroke: #333; stroke-width: 1; }

.ribbon-end { display: flex; margin-left: auto; }
.ribbon-end .tool { padding-right: 4px; padding-left: 4px; }
.ribbon-end .snap { padding-right: 7px; padding-left: 8px; border: solid #d0d0d0; border-width: 0 1px; }
.blocks { display: flex; flex-direction: column; gap: 6px; width: 26px; padding: 5px 0 0 5px; overflow: hidden; }

/* Left side */
.workspace { display: flex; flex: 1; min-height: 0; }
.left {
  display: flex;
  flex: none;
  flex-direction: column;
  width: 469px;
}
.tabs {
  display: flex;
  flex: none;
  height: 30px;
  border-bottom: 2px solid #a4a8ac;
  font-size: 16px;
  line-height: 27px;
}
.tabs button {
  padding: 0 8px;
  border: solid #8c8c8c;
  border-width: 1px 1px 0 0;
  background: #d3d3d3;
  color: #222;
}
.tabs button:first-child { padding-left: 6px; }
.tabs .on { background: #f7f7f7; border-top-color: #f7f7f7; color: #555; }

.dock { display: flex; flex: 1; min-height: 0; }
.rail {
  display: flex;
  flex: none;
  flex-direction: column;
  gap: 15px;
  width: 34px;
  height: 82px;
  margin: 3px 2px 0 0;
  padding: 10px 0 0 4px;
  border-top: 2px dotted #aaa;
  border-bottom: 1px solid #8c8c8c;
}
.panel {
  display: flex;
  flex: 1;
  flex-direction: column;
  min-width: 0;
  margin-top: 3px;
  border-top: 1px solid #ccc;
  border-left: 1px solid #c0c0c0;
}
.splitter { display: grid; flex: none; place-items: center; height: 23px; padding-left: 144px; border-bottom: 1px solid #ccc; }
.splitter i { width: 9px; height: 9px; border: 1px solid #999; border-radius: 50%; background: #ddd; }
.ptabs { display: flex; flex: none; height: 33px; margin-top: 3px; padding-left: 2px; }
.ptabs button {
  display: grid;
  place-items: center;
  width: 45px;
  border: solid #8c8c8c;
  border-width: 1px 1px 1px 0;
  background: #d3d3d3;
}
.ptabs .on { border-bottom-color: #f7f7f7; background: #f7f7f7; }
.filter {
  display: flex;
  flex: none;
  align-items: center;
  gap: 2px;
  height: 33px;
  margin-left: 3px;
  padding-left: 4px;
  border: solid #c8c8c8;
  border-width: 1px 0 1px 1px;
}
.tree {
  flex: none;
  margin: 1px 0 0;
  padding: 0;
  overflow: hidden;
  list-style: none;
  border-bottom: 4px solid #2f86c2;
}
.tree li {
  display: grid;
  grid-template-columns: 22px 24px minmax(0, 1fr);
  align-items: center;
  height: 28px;
  padding-left: 12px;
  white-space: nowrap;
}
.tree span { padding-left: 6px; overflow: hidden; }
.tw { width: 6px; height: 10px; color: #555; }
.hscroll { display: flex; flex: none; height: 26px; margin-top: 1px; }
.hscroll button { padding: 0 7px; background: #f0f0f0; }
.hscroll span { flex: 1; background: #cdcdcd; }

/* Model view */
.viewport { flex: 1; min-width: 0; border-top: 1px solid #8c8c8c; overflow: hidden; }
.viewport > svg { width: 100%; height: 100%; }
```
